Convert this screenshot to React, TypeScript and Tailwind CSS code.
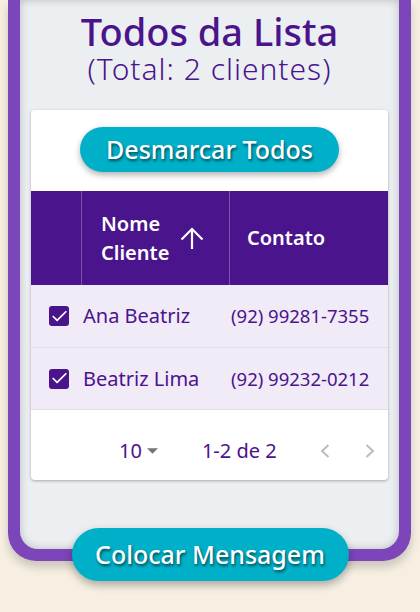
import { Check } from "lucide-react";

type Cliente = { nome: string; contato: string };

const clientes: Cliente[] = [
  { nome: "Ana Beatriz", contato: "(92) 99281-7355" },
  { nome: "Beatriz Lima", contato: "(92) 99232-0212" },
];

export default function App() {
  return (
    <div className="min-h-[612px] w-[420px] bg-[#f6efe2] font-['Noto_Sans',sans-serif]">
      {/* Frame */}
      <div className="ml-2 w-[403px] rounded-b-[28px] bg-[#7c45ba] px-[12px] pb-[12px] shadow-[0_6px_10px_rgba(0,0,0,0.18)]">
        <div className="h-[549px] rounded-b-[18px] bg-[#eceff1] px-[11px] pt-[11px] shadow-[inset_0_0_8px_rgba(0,0,0,0.22)]">
          <h1 className="text-center text-[38px] font-medium leading-[41px] text-[#4a148c]">
            Todos da Lista
          </h1>
          <p className="text-center text-[30px] font-light leading-[34px] tracking-[1px] text-[#4a148c]">
            (Total: 2 clientes)
          </p>

          {/* Card */}
          <div className="mt-[24px] overflow-hidden rounded-[4px] bg-white shadow-[0_1px_3px_rgba(0,0,0,0.3)]">
            <div className="flex justify-center pt-[17px]">
              <button
                className="h-[45px] w-[259px] rounded-full bg-[#00b0c9] text-[25px] font-medium text-white shadow-[0_3px_6px_rgba(0,0,0,0.3)] [text-shadow:1px_2px_3px_rgba(0,0,0,0.6)]"
                type="button"
              >
                Desmarcar Todos
              </button>
            </div>

            {/* Header */}
            <div className="mt-[19px] flex h-[94px] bg-[#4a148c] text-[20px] font-semibold text-white">
              <div className="w-[51px] border-r border-[#7a52aa]" />
              <div className="flex w-[148px] items-center border-r border-[#7a52aa] pl-[19px]">
                <span className="leading-[29px]">
                  Nome
                  <br />
                  Cliente
                </span>
                <svg className="ml-[11px]" fill="none" height="22" stroke="white" strokeWidth="2.2" viewBox="0 0 24 22" width="24">
                  <path d="M1.5 12.5 12 2l10.5 10.5" />
                  <path d="M12 2v20" />
                </svg>
              </div>
              <div className="flex flex-1 items-center pl-[17px]">Contato</div>
            </div>

            {/* Rows */}
            {clientes.map((c, i) => (
              <div
                className={`flex items-center border-b border-[#e2dde8] bg-[#f1eaf7] text-[#4a148c] ${i === 0 ? "h-[63px]" : "h-[62px]"}`}
                key={c.nome}
              >
                <div className="flex w-[51px] justify-end pr-[13px]">
                  <span className="flex h-[20px] w-[20px] items-center justify-center rounded-[3px] bg-[#4a148c]">
                    <Check className="text-white" size={19} strokeWidth={2.2} />
                  </span>
                </div>
                <div className="w-[148px] pl-[1px] text-[20px]">{c.nome}</div>
                <div className="flex-1 pl-[1px] text-[18.5px]">{c.contato}</div>
              </div>
            ))}

            {/* Pagination */}
            <div className="flex h-[70px] items-center pt-[12px] text-[20px] text-[#4a148c]">
              <span className="ml-[88px]">10</span>
              <svg className="ml-[5px]" height="6" viewBox="0 0 10 5" width="11">
                <path d="M0 0h10L5 5z" fill="#757575" />
              </svg>
              <span className="ml-[44px]">1-2 de 2</span>
              <svg className="ml-[43px]" fill="none" height="14" stroke="#bdbdbd" strokeWidth="2" viewBox="0 0 10 14" width="10">
                <path d="M8.5 1 2 7l6.5 6" />
              </svg>
              <svg className="ml-[35px]" fill="none" height="14" stroke="#bdbdbd" strokeWidth="2" viewBox="0 0 10 14" width="10">
                <path d="m1.5 1 6.5 6-6.5 6" />
              </svg>
            </div>
          </div>
        </div>
      </div>

      <div className="relative z-10 -mt-[33px] flex justify-center">
        <button
          className="h-[53px] w-[277px] rounded-full bg-[#00b0c9] text-[25px] font-medium text-white shadow-[0_4px_8px_rgba(0,0,0,0.3)] [text-shadow:1px_2px_3px_rgba(0,0,0,0.6)]"
          type="button"
        >
          Colocar Mensagem
        </button>
      </div>
    </div>
  );
}
